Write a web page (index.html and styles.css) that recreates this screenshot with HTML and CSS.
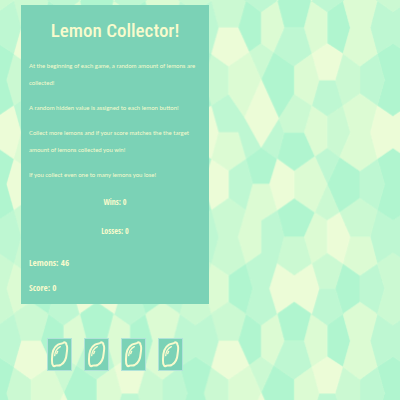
FILE: index.html
```
<!DOCTYPE html>
<html lang="en">
<head>
<meta charset="utf-8">
<title>Lemon Collector!</title>
<link rel="stylesheet" href="styles.css">
</head>
<body>
<svg class="backdrop" aria-hidden="true">
  <defs>
    <g id="tile">
      <g class="mint">
        <path d="M737 2L783 36V130L747 156L714 83Z"/>
        <path d="M882 -34L933 2L912 83H852L831 2Z"/>
        <path d="M981 36L1028 2L1050 83L1028 161L981 130Z"/>
        <path d="M820 156L882 199V282L836 355L783 238Z"/>
        <path d="M1178 130L1225 161L1203 240L1225 317L1178 349L1131 317L1153 240L1131 161Z"/>
        <path d="M852 397H912L944 469L882 513L831 476Z"/>
        <path d="M783 442L831 476L808 552H758L737 476Z"/>
        <path d="M1018 471L1079 513V594L1018 637L981 552Z"/>
        <path d="M1178 444L1225 476L1203 552L1225 630L1178 661L1131 630L1153 552L1131 476Z"/>
        <path d="M882 594L944 637L912 710H852L831 630Z"/>
        <path d="M685 826L737 790L758 865L737 941L685 907Z"/>
        <path d="M1028 790L1079 826V907L1028 941L1005 865Z"/>
      </g>
      <g class="aqua">
        <path d="M852 83H912L935 161L882 199L820 156Z"/>
        <path d="M1131 2L1178 36L1225 2L1247 83L1225 161L1178 130L1131 161L1110 83Z"/>
        <path d="M957 240H1005L1028 317L981 349L935 317Z"/>
        <path d="M1079 199L1131 161L1153 240L1131 317L1079 280Z"/>
        <path d="M685 282L733 352L783 442L737 476L714 397H655L632 317Z"/>
        <path d="M836 355L852 397L831 476L783 442Z"/>
        <path d="M685 512L737 476L758 552L737 630L685 593Z"/>
        <path d="M981 443L1018 471L981 552L944 469Z"/>
        <path d="M1079 513L1131 476L1153 552L1131 630L1079 594Z"/>
        <path d="M783 661L831 630L852 710L831 790L808 865L831 941L783 975L737 941L758 865L737 790L783 758Z"/>
        <path d="M1131 630L1178 661L1225 630L1247 710L1225 790L1178 758L1131 790L1110 710Z"/>
        <path d="M957 865H1005L1028 941L981 975L933 941Z"/>
        <path d="M1079 826L1131 790L1153 865L1131 941L1079 907Z"/>
      </g>
      <g class="green">
        <path d="M632 2L685 -34L737 2L714 83H655Z"/>
        <path d="M783 130L820 156L783 238L747 156Z"/>
        <path d="M1028 161L1079 199V280L1028 317L1005 240Z"/>
        <path d="M632 161L685 199V282L632 317L611 240Z"/>
        <path d="M882 282L935 317L912 397H852L836 355Z"/>
        <path d="M981 349L1028 317L1050 397L1018 471L981 443Z"/>
        <path d="M981 552L1018 637L981 661L944 637Z"/>
        <path d="M685 593L737 630L714 710L737 790L685 826L632 790L655 710L632 630Z"/>
        <path d="M852 710H912L935 790L882 826L831 790Z"/>
        <path d="M1018 637L1079 594L1131 630L1110 710H1050Z"/>
        <path d="M935 790L981 758L1028 790L1005 865H957Z"/>
        <path d="M1178 758L1225 790L1203 865L1225 941L1178 975L1131 941L1153 865L1131 790Z"/>
      </g>
      <g class="lime">
        <path d="M783 36L831 2L852 83L820 156L783 130Z"/>
        <path d="M933 2L981 36V130L935 161L912 83Z"/>
        <path d="M1028 2L1079 -34L1131 2L1110 83L1131 161L1079 199L1028 161L1050 83Z"/>
        <path d="M685 199L747 156L783 238L733 352L685 282Z"/>
        <path d="M882 199L935 161L957 240L935 317L882 282Z"/>
        <path d="M655 397H714L737 476L685 512L632 476Z"/>
        <path d="M935 317L981 349V443L944 469L912 397Z"/>
        <path d="M1028 317L1079 280L1131 317L1110 397L1131 476L1079 513L1018 471L1050 397Z"/>
        <path d="M882 513L944 469L981 552L944 637L882 594Z"/>
        <path d="M758 552H808L831 630L783 661V758L737 790L714 710L737 630Z"/>
        <path d="M944 637L981 661V758L935 790L912 710Z"/>
        <path d="M1050 710H1110L1131 790L1079 826L1028 790Z"/>
        <path d="M632 790L685 826V907L632 941L611 865Z"/>
      </g>
      <g class="cream">
        <path d="M655 83H714L747 156L685 199L632 161Z"/>
        <path d="M783 238L836 355L783 442L733 352Z"/>
        <path d="M981 130L1028 161L1005 240H957L935 161Z"/>
        <path d="M1131 317L1178 349L1225 317L1247 397L1225 476L1178 444L1131 476L1110 397Z"/>
        <path d="M632 476L685 512V593L632 630L611 552Z"/>
        <path d="M831 476L882 513V594L831 630L808 552Z"/>
        <path d="M981 661L1018 637L1050 710L1028 790L981 758Z"/>
        <path d="M831 790L882 826L935 790L957 865L935 941L882 905L831 941L808 865Z"/>
      </g>
    </g>
    <pattern id="mosaic" width="592" height="939" patternUnits="userSpaceOnUse" patternTransform="scale(0.3336)">
      <use href="#tile" x="-592" y="0"/>
      <use href="#tile" x="-1184" y="0"/>
      <use href="#tile" x="-592" y="-939"/>
      <use href="#tile" x="-1184" y="-939"/>
      <use href="#tile" x="-592" y="939"/>
      <use href="#tile" x="-1184" y="939"/>
    </pattern>
    <symbol id="lemon" viewBox="0 0 69 93">
      <path class="rind" d="M15 79C11 75 12 68 12 60C12 42 17 25 30 17C36 13 41 15 45 12C50 8 56 11 55 17C60 23 57 34 56 43C55 59 47 73 38 78C32 81 27 78 23 80C20 82 17 82 15 79Z"/>
      <path class="shine" d="M20 50C21 38 27 28 37 23M26 44L29 37"/>
    </symbol>
  </defs>
  <rect width="100%" height="100%" fill="url(#mosaic)"/>
</svg>
<main class="game">
  <section class="panel">
    <h1>Lemon Collector!</h1>
    <div class="rules">
      <p>At the beginning of each game, a random amount of lemons are collected!</p>
      <p>A random hidden value is assigned to each lemon button!</p>
      <p>Collect more lemons and if your score matches the the target amount of lemons collected you win!</p>
      <p>If you collect even one to many lemons you lose!</p>
    </div>
    <div class="record">
      <p>Wins: 0</p>
      <p>Losses: 0</p>
    </div>
    <div class="totals">
      <p>Lemons: 46</p>
      <p>Score: 0</p>
    </div>
  </section>
  <div class="lemons">
    <button type="button" aria-label="Lemon 1"><svg><use href="#lemon"/></svg></button>
    <button type="button" aria-label="Lemon 2"><svg><use href="#lemon"/></svg></button>
    <button type="button" aria-label="Lemon 3"><svg><use href="#lemon"/></svg></button>
    <button type="button" aria-label="Lemon 4"><svg><use href="#lemon"/></svg></button>
  </div>
</main>
</body>
</html>
```
FILE: styles.css
```
* {
  box-sizing: border-box;
}

body {
  margin: 0;
  background: #cbf9d1;
  color: #f8fbcd;
  font-family: "Roboto Condensed", "Open Sans Condensed", sans-serif;
}

h1,
p {
  margin: 0;
}

.backdrop {
  position: fixed;
  inset: 0;
  z-index: -1;
  width: 100%;
  height: 100%;
}

.mint { fill: #b0f5cf; stroke: #b0f5cf; }
.aqua { fill: #bef7d2; stroke: #bef7d2; }
.green { fill: #cbf9d2; stroke: #cbf9d2; }
.lime { fill: #dcfbd3; stroke: #dcfbd3; }
.cream { fill: #ecfcd7; stroke: #ecfcd7; }

.game {
  width: 47%;
  margin: 5px 21px;
}

.panel {
  padding: 8px;
  background: #7bd2b6;
}

h1 {
  margin-bottom: 8px;
  font-size: 19px;
  font-weight: 500;
  line-height: 36px;
  text-align: center;
}

.rules,
.record,
.totals {
  display: flex;
  flex-direction: column;
  line-height: 17px;
}

.rules {
  gap: 8px;
  font-family: Lato, sans-serif;
  font-size: 6px;
}

.record,
.totals {
  font-family: "Open Sans Condensed", "Open Sans", sans-serif;
}

.record {
  gap: 12px;
  margin: 10px 0 15px;
  font-size: 8px;
  text-align: center;
}

.totals {
  gap: 8px;
  font-size: 9px;
}

.lemons {
  display: flex;
  justify-content: center;
  gap: 14px;
  margin-top: 35px;
}

.lemons button {
  width: 23px;
  height: 31px;
  padding: 0;
  border: 0;
  outline: 1px solid #b0e3d9;
  background: #7bd2b6;
}

.lemons svg {
  display: block;
  width: 100%;
  height: 100%;
}

.rind,
.shine {
  fill: none;
  stroke: #f8fbcd;
  stroke-linecap: round;
  stroke-linejoin: round;
}

.rind { stroke-width: 6; }
.shine { stroke-width: 4; }
```
